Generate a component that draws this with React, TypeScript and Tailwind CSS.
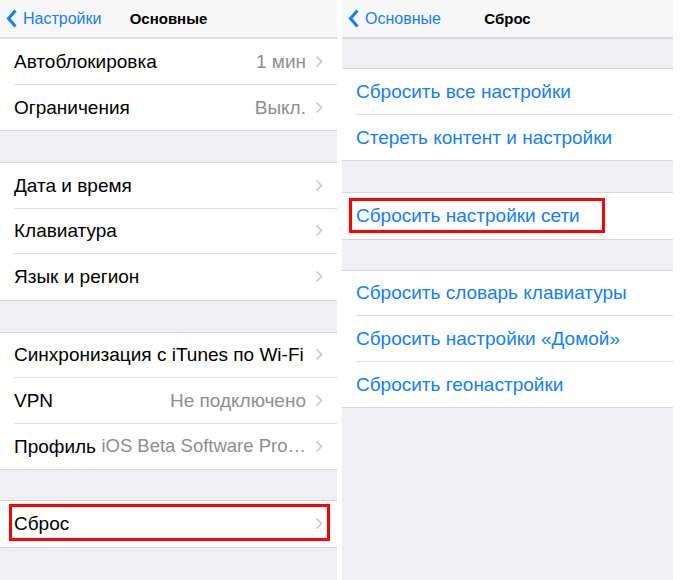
import React from "react";

const font = { fontFamily: '"Liberation Sans", Arial, sans-serif' };

function Chevron() {
  return (
    <svg width="8" height="13" viewBox="0 0 8 13" className="shrink-0">
      <path d="M1.5 1.5 L6.5 6.5 L1.5 11.5" fill="none" stroke="#c7c7cc" strokeWidth="1.6" />
    </svg>
  );
}

function BackChevron() {
  return (
    <svg width="12" height="19" viewBox="0 0 12 19" className="shrink-0">
      <path d="M9.5 1.5 L2.5 9.5 L9.5 17.5" fill="none" stroke="#147efb" strokeWidth="3" />
    </svg>
  );
}

function NavBar({ back, title }: { back: string; title: string }) {
  return (
    <div className="relative h-[39px] shrink-0 bg-[#f7f7f8] border-b-2 border-[#dcdce0] flex items-center">
      <div className="flex items-center pl-[6px] gap-[5px]">
        <BackChevron />
        <span className="text-[16px] text-[#147efb] leading-none">{back}</span>
      </div>
      <div className="absolute inset-0 flex items-center justify-center pointer-events-none">
        <span className="text-[15px] font-bold text-black leading-none">{title}</span>
      </div>
    </div>
  );
}

type RowProps = {
  label: string;
  value?: string;
  chevron?: boolean;
  blue?: boolean;
  last?: boolean;
  highlight?: React.ReactNode;
  valueInline?: boolean;
};

function Row({ label, value, chevron, blue, last, highlight, valueInline }: RowProps) {
  return (
    <div className="relative h-[45.5px] bg-white pl-[14px]">
      <div
        className={
          "h-full flex items-center pr-[14px] " + (last ? "" : "border-b border-[#e0e0e4]")
        }
      >
        <span className={"text-[19px] leading-none whitespace-nowrap " + (blue ? "text-[#147efb]" : "text-black")}>
          {label}
        </span>
        {valueInline ? (
          <span className="ml-[5px] flex-1 text-[18.5px] leading-none text-[#8e8e93] whitespace-nowrap text-right">
            {value}
          </span>
        ) : (
          <span className="flex-1 text-right text-[19px] leading-none text-[#8e8e93] whitespace-nowrap">
            {value ?? ""}
          </span>
        )}
        {chevron && (
          <span className="ml-[9px] flex items-center">
            <Chevron />
          </span>
        )}
      </div>
      {highlight}
    </div>
  );
}

function Group({ children, top = true }: { children: React.ReactNode; top?: boolean }) {
  return (
    <div className={"bg-white border-b border-[#d6d6da] " + (top ? "border-t" : "")}>{children}</div>
  );
}

export default function App() {
  return (
    <div className="w-[680px] h-[580px] bg-white flex overflow-hidden" style={font}>
      {/* Left panel */}
      <div className="w-[337px] h-full bg-[#efeff4] flex flex-col">
        <NavBar back="Настройки" title="Основные" />
        <Group top={false}>
          <Row label="Автоблокировка" value="1 мин" chevron />
          <Row label="Ограничения" value="Выкл." chevron last />
        </Group>
        <div className="h-[31px] shrink-0" />
        <Group>
          <Row label="Дата и время" chevron />
          <Row label="Клавиатура" chevron />
          <Row label="Язык и регион" chevron last />
        </Group>
        <div className="h-[31px] shrink-0" />
        <Group>
          <Row label="Синхронизация с iTunes по Wi-Fi" chevron />
          <Row label="VPN" value="Не подключено" chevron />
          <Row label="Профиль" value="iOS Beta Software Pro…" valueInline chevron last />
        </Group>
        <div className="h-[30px] shrink-0" />
        <Group>
          <Row
            label="Сброс"
            chevron
            last
            highlight={
              <div className="absolute left-[9px] right-[7px] top-[3px] bottom-[6px] border-[3px] border-[#ff0000]" />
            }
          />
        </Group>
      </div>

      <div className="w-[5px] h-full bg-white" />

      {/* Right panel */}
      <div className="w-[331px] h-full bg-[#efeff4] flex flex-col">
        <NavBar back="Основные" title="Сброс" />
        <div className="h-[29px] shrink-0" />
        <Group>
          <Row label="Сбросить все настройки" blue />
          <Row label="Стереть контент и настройки" blue last />
        </Group>
        <div className="h-[31px] shrink-0" />
        <Group>
          <Row
            label="Сбросить настройки сети"
            blue
            last
            highlight={
              <div className="absolute left-[7px] w-[256px] top-[5px] bottom-[6px] border-[3px] border-[#ff0000]" />
            }
          />
        </Group>
        <div className="h-[30px] shrink-0" />
        <Group>
          <Row label="Сбросить словарь клавиатуры" blue />
          <Row label="Сбросить настройки «Домой»" blue />
          <Row label="Сбросить геонастройки" blue last />
        </Group>
      </div>

      <div className="w-[7px] h-full bg-white" />
    </div>
  );
}
